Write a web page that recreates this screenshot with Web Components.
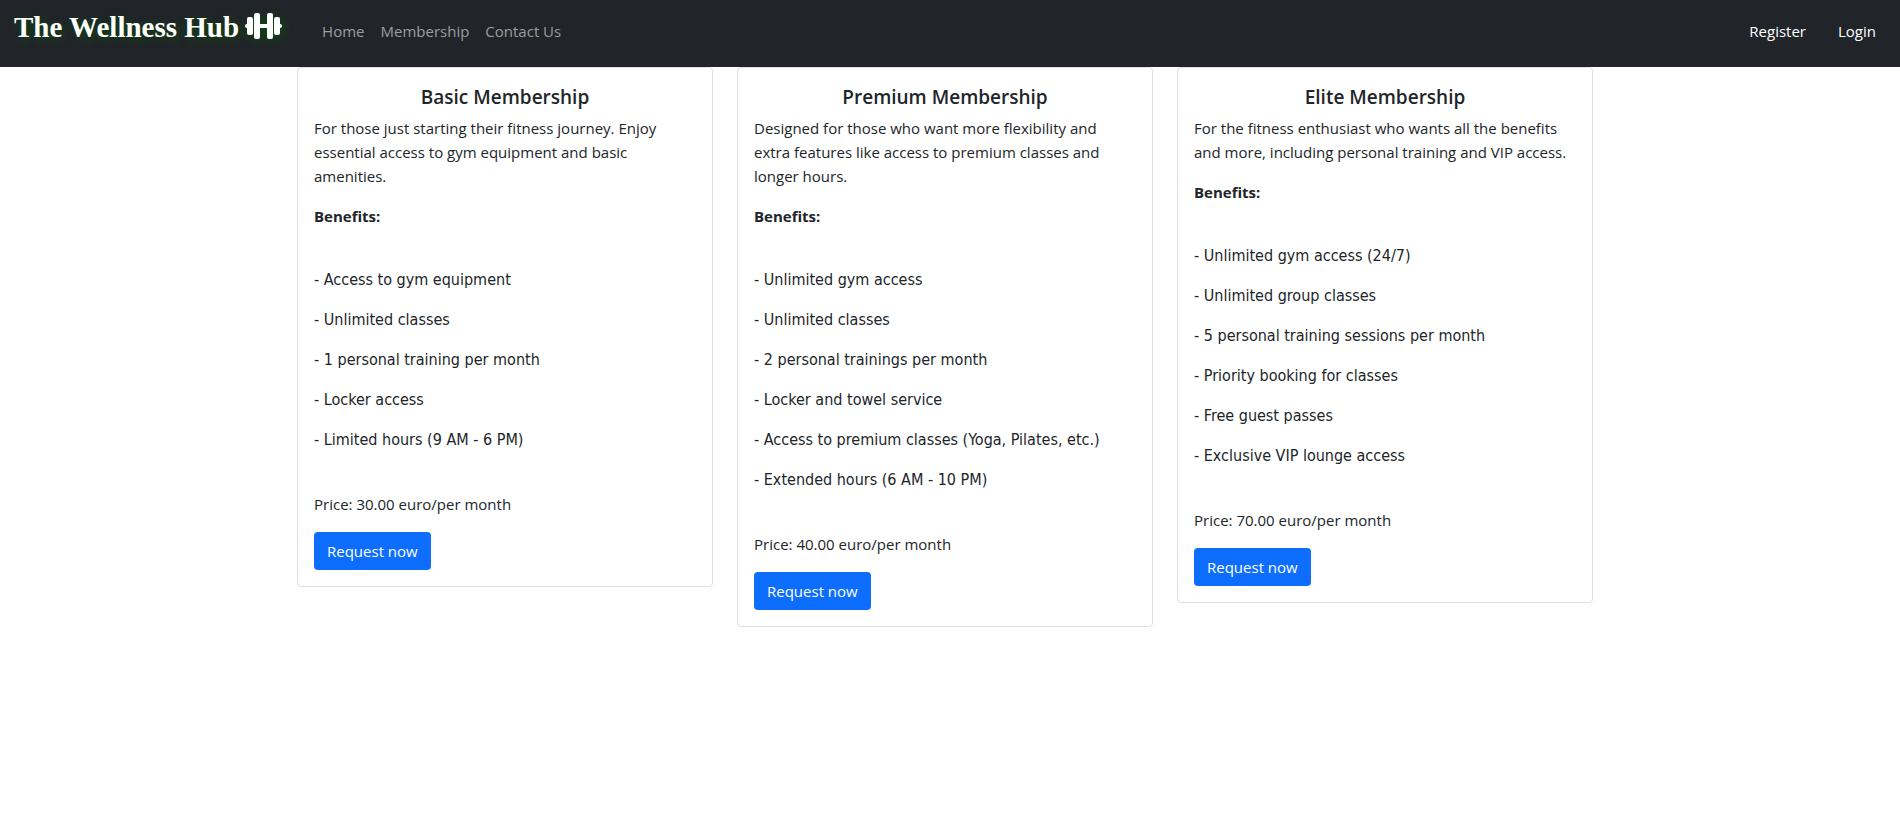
<!DOCTYPE html>
<html lang="en">
<head>
<meta charset="utf-8">
<title>The Wellness Hub</title>
<style>
body { margin: 0; background: #fff; color: #212529; font: 400 15px/24px "Open Sans", "Noto Sans", sans-serif; }
</style>
</head>
<body>
<wellness-nav>
  <nav-link href="#home">Home</nav-link>
  <nav-link href="#membership">Membership</nav-link>
  <nav-link href="#contact">Contact Us</nav-link>
  <nav-link slot="account" bright href="#register">Register</nav-link>
  <nav-link slot="account" bright href="#login">Login</nav-link>
</wellness-nav>
<plan-list>
  <plan-card price="30.00">
    <span slot="title">Basic Membership</span>
    <span slot="description">For those just starting their fitness journey. Enjoy essential access to gym equipment and basic amenities.</span>
    <plan-benefit>- Access to gym equipment</plan-benefit>
    <plan-benefit>- Unlimited classes</plan-benefit>
    <plan-benefit>- 1 personal training per month</plan-benefit>
    <plan-benefit>- Locker access</plan-benefit>
    <plan-benefit>- Limited hours (9 AM - 6 PM)</plan-benefit>
  </plan-card>
  <plan-card price="40.00">
    <span slot="title">Premium Membership</span>
    <span slot="description">Designed for those who want more flexibility and extra features like access to premium classes and longer hours.</span>
    <plan-benefit>- Unlimited gym access</plan-benefit>
    <plan-benefit>- Unlimited classes</plan-benefit>
    <plan-benefit>- 2 personal trainings per month</plan-benefit>
    <plan-benefit>- Locker and towel service</plan-benefit>
    <plan-benefit>- Access to premium classes (Yoga, Pilates, etc.)</plan-benefit>
    <plan-benefit>- Extended hours (6 AM - 10 PM)</plan-benefit>
  </plan-card>
  <plan-card price="70.00">
    <span slot="title">Elite Membership</span>
    <span slot="description">For the fitness enthusiast who wants all the benefits and more, including personal training and VIP access.</span>
    <plan-benefit>- Unlimited gym access (24/7)</plan-benefit>
    <plan-benefit>- Unlimited group classes</plan-benefit>
    <plan-benefit>- 5 personal training sessions per month</plan-benefit>
    <plan-benefit>- Priority booking for classes</plan-benefit>
    <plan-benefit>- Free guest passes</plan-benefit>
    <plan-benefit>- Exclusive VIP lounge access</plan-benefit>
  </plan-card>
</plan-list>
<script>
class ShadowElement extends HTMLElement {
  constructor() {
    super();
    const template = document.createElement('template');
    template.innerHTML = this.constructor.markup;
    this.attachShadow({ mode: 'open' }).append(template.content.cloneNode(true));
  }
}

class WellnessNav extends ShadowElement {
  static markup = `
    <style>
      :host { display: block; background: #212529; }
      nav { display: flex; align-items: flex-start; padding: 7px 12px 20px 14px; }
      .brand { display: flex; align-items: center; gap: 6px; height: 40px; margin-right: 39px;
        color: #fff; text-decoration: none; white-space: nowrap;
        font: 700 29px/40px "Liberation Serif", serif; text-shadow: 2px 2px 8px #0d4a0d; }
      svg { width: 38px; height: 28px; padding-bottom: 2px; overflow: visible; filter: drop-shadow(2px 2px 4px #0d4a0d); }
      .links { display: flex; flex: 1; gap: 16px; padding-top: 12px; }
      .account { display: flex; gap: 32px; padding: 12px 12px 0 0; }
    </style>
    <nav aria-label="Main">
      <a class="brand" href="#home">The Wellness Hub
        <svg viewBox="0 0 38 28" fill="#fff" aria-hidden="true">
          <rect x="0" y="12" width="4" height="4" rx="2"/><rect x="33" y="12" width="4" height="4" rx="2"/>
          <rect x="14" y="12" width="9" height="4"/>
          <rect x="2" y="5" width="6" height="18" rx="2"/><rect x="9" y="1" width="6" height="26" rx="2"/>
          <rect x="22" y="1" width="6" height="26" rx="2"/><rect x="29" y="5" width="6" height="18" rx="2"/>
        </svg></a>
      <div class="links"><slot></slot></div>
      <div class="account"><slot name="account"></slot></div>
    </nav>`;
}

class NavLink extends ShadowElement {
  static markup = `
    <style>
      :host { display: block; }
      a { color: #9b9d9e; text-decoration: none; }
      :host([bright]) a { color: #fff; }
    </style>
    <a><slot></slot></a>`;
  connectedCallback() { this.shadowRoot.querySelector('a').href = this.getAttribute('href'); }
}

class PlanList extends ShadowElement {
  static markup = `
    <style>
      :host { display: block; padding-right: 10px; }
      main { display: grid; grid-template-columns: repeat(auto-fit, minmax(300px, 1fr)); align-items: start; gap: 24px;
        max-width: 1296px; margin: 0 auto; }
    </style>
    <main><slot></slot></main>`;
}

class PlanCard extends ShadowElement {
  static markup = `
    <style>
      :host { display: block; padding: 16px; border: 1px solid #dfdfdf; border-radius: 4px; }
      h5 { margin: 0 0 6px; font-size: 19px; font-weight: 600; line-height: 26px; text-align: center; }
      p { margin: 0 0 16px; }
      strong { font-weight: 700; }
      .benefits { display: grid; gap: 16px; padding: 24px 0; margin-bottom: 16px; }
      button { display: block; height: 38px; padding: 0 13px; border: 0; border-radius: 4px; background: #0d6efd;
        color: #fff; font: inherit; cursor: pointer; }
    </style>
    <h5><slot name="title"></slot></h5>
    <p><slot name="description"></slot></p>
    <p><strong>Benefits:</strong></p>
    <div class="benefits" role="list"><slot></slot></div>
    <p class="price"></p>
    <button type="button">Request now</button>`;
  connectedCallback() {
    this.shadowRoot.querySelector('.price').textContent = `Price: ${this.getAttribute('price')} euro/per month`;
  }
}

class PlanBenefit extends ShadowElement {
  static markup = `
    <style>:host { display: block; font-family: "DejaVu Sans Condensed", "DejaVu Sans", sans-serif; font-size: 16px; }</style>
    <slot></slot>`;
  connectedCallback() { this.setAttribute('role', 'listitem'); }
}

customElements.define('wellness-nav', WellnessNav);
customElements.define('nav-link', NavLink);
customElements.define('plan-list', PlanList);
customElements.define('plan-card', PlanCard);
customElements.define('plan-benefit', PlanBenefit);
</script>
</body>
</html>
